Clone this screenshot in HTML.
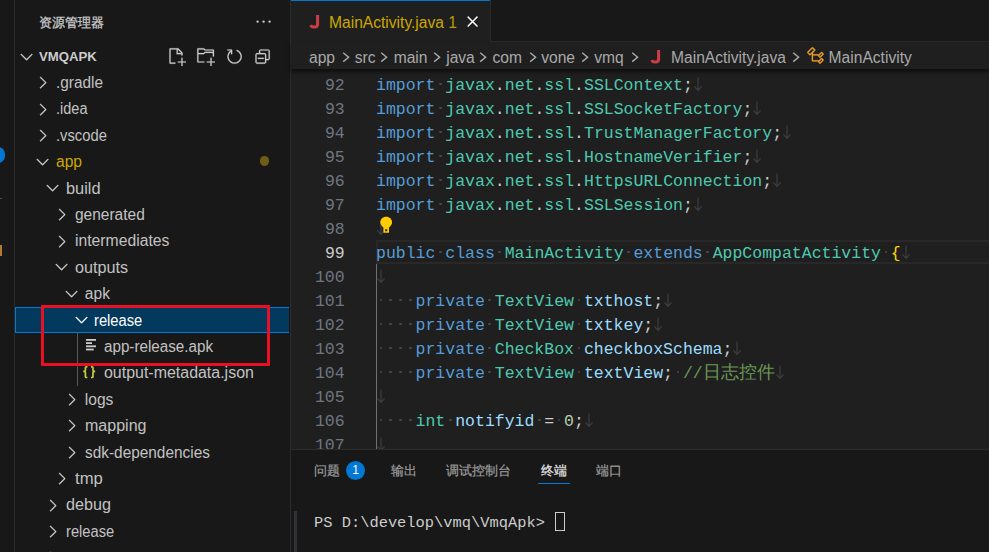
<!DOCTYPE html>
<html><head><meta charset="utf-8"><style>
*{margin:0;padding:0;box-sizing:border-box}
html,body{width:989px;height:552px;overflow:hidden;background:#181818;font-family:"Liberation Sans",sans-serif;}
.a{position:absolute}
.row{position:absolute;left:15px;width:275px;height:26.4px;font-size:15.6px;color:#cccccc;white-space:nowrap}
.row .t{position:absolute;top:0;line-height:26.4px}
.code{font-family:"Liberation Mono",monospace;font-size:16.5px;white-space:pre;line-height:24px}
.ln{position:absolute;left:291px;width:54.5px;text-align:right;color:#6e7681}
.cl{position:absolute;left:375px;color:#cccccc}
.k{color:#569cd6}.ty{color:#4ec9b0}.v{color:#9cdcfe}.c{color:#6a9955}.n{color:#b5cea8}.br{color:#ffd700}.p{color:#d4d4d4}
.ws{color:#404040}
.d{display:inline-block;width:9.9px;height:1px;position:relative}
.d::after{content:'';position:absolute;left:3.6px;top:-6.6px;width:2.7px;height:2.7px;border-radius:50%;background:#484848}
.ptab{position:absolute;font-size:13.2px;color:#9d9d9d;white-space:nowrap;line-height:20px}
</style></head><body>
<div class="a" style="left:0;top:0;width:14px;height:552px;background:#181818"></div>
<div class="a" style="left:14px;top:0;width:1px;height:552px;background:#2b2b2b"></div>
<div class="a" style="left:-9px;top:146.5px;width:14px;height:16px;border-radius:8px;background:#0078d4"></div>
<div class="a" style="left:0;top:245px;width:1.5px;height:11px;background:#b07a30"></div>
<div class="a" style="left:0;top:197.5px;width:1.5px;height:1.5px;background:#7a3a2a"></div>
<div class="a" style="left:15px;top:0;width:275px;height:552px;background:#181818"></div>
<div class="a" style="left:290px;top:0;width:1px;height:552px;background:#2b2b2b"></div>
<div class="a" style="left:38.6px;top:12.8px;font-size:13.2px;color:#cccccc;white-space:nowrap;line-height:20px;-webkit-text-stroke:0.3px #cccccc">资源管理器</div>
<svg class="a" style="left:16.9px;top:46.9px" width="19.2" height="19.2" viewBox="0 0 16 16" fill="#cccccc"><path d="M7.976 10.072l4.357-4.357.62.618L8.284 11h-.618L3 6.333l.619-.618 4.357 4.357z" stroke="#cccccc" stroke-width="0.25"/></svg>
<svg class="a" style="left:253.6px;top:11.9px" width="19.2" height="19.2" viewBox="0 0 16 16" fill="#cccccc"><path d="M4 8a1 1 0 1 1-2 0 1 1 0 0 1 2 0zm5 0a1 1 0 1 1-2 0 1 1 0 0 1 2 0zm5 0a1 1 0 1 1-2 0 1 1 0 0 1 2 0z"/></svg>
<div class="a" style="left:39px;top:47.7px;font-size:13.2px;font-weight:bold;color:#cccccc;line-height:18px">VMQAPK</div>
<svg class="a" style="left:167.1px;top:46.7px" width="19.2" height="19.2" viewBox="0 0 16 16" fill="#cccccc" stroke="#cccccc" stroke-width="0.15"><path fill-rule="evenodd" d="M9.5 1.1l3.4 3.5.1.4v2h-1V6H8V2H3v11h4v1H2.5l-.5-.5v-12l.5-.5h6.7l.3.1zM9 2v3h2.9L9 2zm4 14h-1v-3H9v-1h3V9h1v3h3v1h-3v3z"/></svg>
<svg class="a" style="left:195.8px;top:46.7px" width="19.2" height="19.2" viewBox="0 0 16 16" fill="#cccccc" stroke="#cccccc" stroke-width="0.15"><path fill-rule="evenodd" d="M14.5 2H7.710l-.85-.85L6.51 1h-5l-.5.5v11l.5.5H7v-1H1.99V6h4.49l.35-.15.86-.86H14v1.5l-.001 1.51h1.011V2.5L14.5 2zm-.51 2h-6.5l-.35.15-.86.86H2v-3h4.29l.85.85.36.15H14l-.01.99zM13 16h-1v-3H9v-1h3V9h1v3h3v1h-3v3z"/></svg>
<svg class="a" style="left:224.6px;top:46.7px" width="19.2" height="19.2" viewBox="0 0 16 16" fill="#cccccc" stroke="#cccccc" stroke-width="0.15"><path fill-rule="evenodd" d="M5.56253 2.51577C3.46348 3.4501 2 5.55414 2 7.99999C2 11.3137 4.68629 14 8 14C11.3137 14 14 11.3137 14 7.99999C14 5.32519 12.2497 3.05919 9.83199 2.28482L9.52968 3.23832C11.5429 3.88454 13 5.7721 13 7.99999C13 10.7614 10.7614 13 8 13C5.23858 13 3 10.7614 3 7.99999C3 6.31104 3.83742 4.81767 5.11969 3.91245L5.56253 2.51577Z"/><path fill-rule="evenodd" d="M5 3H2V2H5.5L6 2.5V6H5V3Z"/></svg>
<svg class="a" style="left:253.4px;top:46.7px" width="19.2" height="19.2" viewBox="0 0 16 16" fill="#cccccc" stroke="#cccccc" stroke-width="0.15"><path d="M9 9H4v1h5V9z"/><path fill-rule="evenodd" d="M5 3l1-1h7l1 1v7l-1 1h-2v2l-1 1H3l-1-1V6l1-1h2V3zm1 2h4l1 1v4h2V3H6v2zm4 1H3v7h7V6z"/></svg>
<svg class="a" style="left:33.2px;top:73.1px" width="19.2" height="19.2" viewBox="0 0 16 16" fill="#cccccc"><path d="M10.072 8.024L5.715 3.667l.618-.62L11 7.716v.618L6.333 13l-.618-.619 4.357-4.357z" stroke="#cccccc" stroke-width="0.25"/></svg>
<div class="a" style="left:56.0px;top:69.9px;font-size:15.6px;color:#c2c2c2;white-space:nowrap;line-height:26.4px;transform:scaleX(0.985);transform-origin:0 0">.gradle</div>
<svg class="a" style="left:33.2px;top:99.5px" width="19.2" height="19.2" viewBox="0 0 16 16" fill="#cccccc"><path d="M10.072 8.024L5.715 3.667l.618-.62L11 7.716v.618L6.333 13l-.618-.619 4.357-4.357z" stroke="#cccccc" stroke-width="0.25"/></svg>
<div class="a" style="left:56.0px;top:96.3px;font-size:15.6px;color:#c2c2c2;white-space:nowrap;line-height:26.4px;transform:scaleX(0.931);transform-origin:0 0">.idea</div>
<svg class="a" style="left:33.2px;top:125.89999999999999px" width="19.2" height="19.2" viewBox="0 0 16 16" fill="#cccccc"><path d="M10.072 8.024L5.715 3.667l.618-.62L11 7.716v.618L6.333 13l-.618-.619 4.357-4.357z" stroke="#cccccc" stroke-width="0.25"/></svg>
<div class="a" style="left:56.0px;top:122.7px;font-size:15.6px;color:#c2c2c2;white-space:nowrap;line-height:26.4px;transform:scaleX(0.947);transform-origin:0 0">.vscode</div>
<div class="a" style="left:260px;top:156.3px;width:9.4px;height:9.4px;border-radius:5px;background:#6f5d15"></div>
<svg class="a" style="left:33.2px;top:151.7px" width="19.2" height="19.2" viewBox="0 0 16 16" fill="#cccccc"><path d="M7.976 10.072l4.357-4.357.62.618L8.284 11h-.618L3 6.333l.619-.618 4.357 4.357z" stroke="#cccccc" stroke-width="0.25"/></svg>
<div class="a" style="left:56.0px;top:149.1px;font-size:15.6px;color:#cca700;white-space:nowrap;line-height:26.4px;transform:scaleX(1.000);transform-origin:0 0">app</div>
<svg class="a" style="left:42.8px;top:178.1px" width="19.2" height="19.2" viewBox="0 0 16 16" fill="#cccccc"><path d="M7.976 10.072l4.357-4.357.62.618L8.284 11h-.618L3 6.333l.619-.618 4.357 4.357z" stroke="#cccccc" stroke-width="0.25"/></svg>
<div class="a" style="left:65.6px;top:175.5px;font-size:15.6px;color:#c2c2c2;white-space:nowrap;line-height:26.4px;transform:scaleX(1.051);transform-origin:0 0">build</div>
<svg class="a" style="left:52.400000000000006px;top:205.1px" width="19.2" height="19.2" viewBox="0 0 16 16" fill="#cccccc"><path d="M10.072 8.024L5.715 3.667l.618-.62L11 7.716v.618L6.333 13l-.618-.619 4.357-4.357z" stroke="#cccccc" stroke-width="0.25"/></svg>
<div class="a" style="left:75.2px;top:201.9px;font-size:15.6px;color:#c2c2c2;white-space:nowrap;line-height:26.4px;transform:scaleX(0.993);transform-origin:0 0">generated</div>
<svg class="a" style="left:52.400000000000006px;top:231.49999999999997px" width="19.2" height="19.2" viewBox="0 0 16 16" fill="#cccccc"><path d="M10.072 8.024L5.715 3.667l.618-.62L11 7.716v.618L6.333 13l-.618-.619 4.357-4.357z" stroke="#cccccc" stroke-width="0.25"/></svg>
<div class="a" style="left:75.2px;top:228.3px;font-size:15.6px;color:#c2c2c2;white-space:nowrap;line-height:26.4px;transform:scaleX(1.008);transform-origin:0 0">intermediates</div>
<svg class="a" style="left:52.400000000000006px;top:257.29999999999995px" width="19.2" height="19.2" viewBox="0 0 16 16" fill="#cccccc"><path d="M7.976 10.072l4.357-4.357.62.618L8.284 11h-.618L3 6.333l.619-.618 4.357 4.357z" stroke="#cccccc" stroke-width="0.25"/></svg>
<div class="a" style="left:75.2px;top:254.7px;font-size:15.6px;color:#c2c2c2;white-space:nowrap;line-height:26.4px;transform:scaleX(1.037);transform-origin:0 0">outputs</div>
<svg class="a" style="left:62.0px;top:283.69999999999993px" width="19.2" height="19.2" viewBox="0 0 16 16" fill="#cccccc"><path d="M7.976 10.072l4.357-4.357.62.618L8.284 11h-.618L3 6.333l.619-.618 4.357 4.357z" stroke="#cccccc" stroke-width="0.25"/></svg>
<div class="a" style="left:84.8px;top:281.1px;font-size:15.6px;color:#c2c2c2;white-space:nowrap;line-height:26.4px;transform:scaleX(1.000);transform-origin:0 0">apk</div>
<div class="a" style="left:15px;top:306.7px;width:274px;height:26.4px;background:#04395e;border:1px solid #0078d4;border-right:none"></div>
<svg class="a" style="left:71.60000000000001px;top:310.09999999999997px" width="19.2" height="19.2" viewBox="0 0 16 16" fill="#ffffff"><path d="M7.976 10.072l4.357-4.357.62.618L8.284 11h-.618L3 6.333l.619-.618 4.357 4.357z" stroke="#ffffff" stroke-width="0.25"/></svg>
<div class="a" style="left:94.4px;top:307.5px;font-size:15.6px;color:#ffffff;white-space:nowrap;line-height:26.4px;transform:scaleX(0.944);transform-origin:0 0">release</div>
<svg class="a" style="left:86px;top:338.6px" width="12" height="14" viewBox="0 0 12 14" fill="#cccccc"><rect x="0" y="0" width="10" height="1.8"/><rect x="0" y="3.2" width="6" height="1.8"/><rect x="0" y="6.4" width="10" height="1.8"/><rect x="0" y="9.6" width="7.7" height="1.8"/></svg>
<div class="a" style="left:104.0px;top:333.9px;font-size:15.6px;color:#c2c2c2;white-space:nowrap;line-height:26.4px;transform:scaleX(0.975);transform-origin:0 0">app-release.apk</div>
<svg class="a" style="left:82px;top:364.8px" width="15" height="14" viewBox="0 0 15 14" fill="none" stroke="#cbcb41" stroke-width="1.7"><path d="M5.4 1.8 H4.4 Q3.4 1.8 3.4 2.8 V5.2 Q3.4 6.4 1.2 6.4 Q3.4 6.4 3.4 7.6 V11.5 Q3.4 12.5 4.4 12.5 H5.4"/><path d="M9 1.8 H10 Q11 1.8 11 2.8 V5.2 Q11 6.4 13.2 6.4 Q11 6.4 11 7.6 V11.5 Q11 12.5 10 12.5 H9"/></svg>
<div class="a" style="left:104.0px;top:360.3px;font-size:15.6px;color:#c2c2c2;white-space:nowrap;line-height:26.4px;transform:scaleX(1.023);transform-origin:0 0">output-metadata.json</div>
<svg class="a" style="left:62.0px;top:389.9px" width="19.2" height="19.2" viewBox="0 0 16 16" fill="#cccccc"><path d="M10.072 8.024L5.715 3.667l.618-.62L11 7.716v.618L6.333 13l-.618-.619 4.357-4.357z" stroke="#cccccc" stroke-width="0.25"/></svg>
<div class="a" style="left:84.8px;top:386.7px;font-size:15.6px;color:#c2c2c2;white-space:nowrap;line-height:26.4px;transform:scaleX(1.000);transform-origin:0 0">logs</div>
<svg class="a" style="left:62.0px;top:416.29999999999995px" width="19.2" height="19.2" viewBox="0 0 16 16" fill="#cccccc"><path d="M10.072 8.024L5.715 3.667l.618-.62L11 7.716v.618L6.333 13l-.618-.619 4.357-4.357z" stroke="#cccccc" stroke-width="0.25"/></svg>
<div class="a" style="left:84.8px;top:413.1px;font-size:15.6px;color:#c2c2c2;white-space:nowrap;line-height:26.4px;transform:scaleX(1.028);transform-origin:0 0">mapping</div>
<svg class="a" style="left:62.0px;top:442.69999999999993px" width="19.2" height="19.2" viewBox="0 0 16 16" fill="#cccccc"><path d="M10.072 8.024L5.715 3.667l.618-.62L11 7.716v.618L6.333 13l-.618-.619 4.357-4.357z" stroke="#cccccc" stroke-width="0.25"/></svg>
<div class="a" style="left:84.8px;top:439.5px;font-size:15.6px;color:#c2c2c2;white-space:nowrap;line-height:26.4px;transform:scaleX(0.987);transform-origin:0 0">sdk-dependencies</div>
<svg class="a" style="left:52.400000000000006px;top:469.1px" width="19.2" height="19.2" viewBox="0 0 16 16" fill="#cccccc"><path d="M10.072 8.024L5.715 3.667l.618-.62L11 7.716v.618L6.333 13l-.618-.619 4.357-4.357z" stroke="#cccccc" stroke-width="0.25"/></svg>
<div class="a" style="left:75.2px;top:465.9px;font-size:15.6px;color:#c2c2c2;white-space:nowrap;line-height:26.4px;transform:scaleX(1.068);transform-origin:0 0">tmp</div>
<svg class="a" style="left:42.8px;top:495.5px" width="19.2" height="19.2" viewBox="0 0 16 16" fill="#cccccc"><path d="M10.072 8.024L5.715 3.667l.618-.62L11 7.716v.618L6.333 13l-.618-.619 4.357-4.357z" stroke="#cccccc" stroke-width="0.25"/></svg>
<div class="a" style="left:65.6px;top:492.3px;font-size:15.6px;color:#c2c2c2;white-space:nowrap;line-height:26.4px;transform:scaleX(1.036);transform-origin:0 0">debug</div>
<svg class="a" style="left:42.8px;top:521.9px" width="19.2" height="19.2" viewBox="0 0 16 16" fill="#cccccc"><path d="M10.072 8.024L5.715 3.667l.618-.62L11 7.716v.618L6.333 13l-.618-.619 4.357-4.357z" stroke="#cccccc" stroke-width="0.25"/></svg>
<div class="a" style="left:65.6px;top:518.7px;font-size:15.6px;color:#c2c2c2;white-space:nowrap;line-height:26.4px;transform:scaleX(0.943);transform-origin:0 0">release</div>
<svg class="a" style="left:42.8px;top:548.3px" width="19.2" height="19.2" viewBox="0 0 16 16" fill="#cccccc"><path d="M10.072 8.024L5.715 3.667l.618-.62L11 7.716v.618L6.333 13l-.618-.619 4.357-4.357z" stroke="#cccccc" stroke-width="0.25"/></svg>
<div class="a" style="left:65.6px;top:545.1px;font-size:15.6px;color:#c2c2c2;white-space:nowrap;line-height:26.4px;transform:scaleX(1.000);transform-origin:0 0">src</div>
<div class="a" style="left:77px;top:333.1px;width:1px;height:52.8px;background:#585858"></div>
<div class="a" style="left:41px;top:305px;width:229px;height:61px;border:3px solid #e81123"></div>
<div class="a" style="left:291px;top:0;width:698px;height:451px;background:#1f1f1f"></div>
<div class="a" style="left:291px;top:0;width:698px;height:42px;background:#181818"></div>
<div class="a" style="left:291px;top:41px;width:698px;height:1px;background:#2b2b2b"></div>
<div class="a" style="left:291px;top:0;width:200px;height:42px;background:#1f1f1f;border-right:1px solid #2b2b2b"></div>
<div class="a" style="left:291px;top:0;width:199px;height:1.3px;background:#0078d4"></div>
<svg class="a" style="left:308.8px;top:14.3px;z-index:4" width="12.0" height="15.0" viewBox="0 0 12 15"><path d="M8.6 1 V10 Q8.6 13 5.6 13 H4.6 Q2.4 13 1.6 11.2" fill="none" stroke="#cc3e44" stroke-width="3"/></svg>
<div class="a" style="left:329px;top:13px;font-size:15.6px;color:#cca700;line-height:20px;white-space:nowrap">MainActivity.java <span style="color:#b89a00">1</span></div>
<svg class="a" style="left:462.8px;top:11.5px" width="19.2" height="19.2" viewBox="0 0 16 16" fill="#ffffff"><path d="M8 8.707l3.646 3.647.708-.707L8.707 8l3.647-3.646-.707-.708L8 7.293 4.354 3.646l-.707.708L7.293 8l-3.646 3.646.707.708L8 8.707z" stroke="#ffffff" stroke-width="0.3"/></svg>
<div class="a" style="left:291px;top:42px;width:698px;height:26.6px;background:#1f1f1f;box-shadow:0 3px 4px rgba(0,0,0,0.55);z-index:3"></div>
<div class="a" style="left:309px;top:47.5px;font-size:15.6px;color:#a9a9a9;line-height:20px;white-space:nowrap;z-index:4">app</div>
<svg class="a" style="left:341.79999999999995px;top:52.2px;z-index:4" width="9" height="11" viewBox="0 0 9 11"><path d="M1.2 0.8 L6.6 5.2 L1.2 9.6" fill="none" stroke="#a9a9a9" stroke-width="1.45"/></svg>
<div class="a" style="left:354.8px;top:47.5px;font-size:15.6px;color:#a9a9a9;line-height:20px;white-space:nowrap;z-index:4">src</div>
<svg class="a" style="left:379.79999999999995px;top:52.2px;z-index:4" width="9" height="11" viewBox="0 0 9 11"><path d="M1.2 0.8 L6.6 5.2 L1.2 9.6" fill="none" stroke="#a9a9a9" stroke-width="1.45"/></svg>
<div class="a" style="left:393.7px;top:47.5px;font-size:15.6px;color:#a9a9a9;line-height:20px;white-space:nowrap;z-index:4">main</div>
<svg class="a" style="left:433.2px;top:52.2px;z-index:4" width="9" height="11" viewBox="0 0 9 11"><path d="M1.2 0.8 L6.6 5.2 L1.2 9.6" fill="none" stroke="#a9a9a9" stroke-width="1.45"/></svg>
<div class="a" style="left:446.2px;top:47.5px;font-size:15.6px;color:#a9a9a9;line-height:20px;white-space:nowrap;z-index:4">java</div>
<svg class="a" style="left:479.4px;top:52.2px;z-index:4" width="9" height="11" viewBox="0 0 9 11"><path d="M1.2 0.8 L6.6 5.2 L1.2 9.6" fill="none" stroke="#a9a9a9" stroke-width="1.45"/></svg>
<div class="a" style="left:492.5px;top:47.5px;font-size:15.6px;color:#a9a9a9;line-height:20px;white-space:nowrap;z-index:4">com</div>
<svg class="a" style="left:528.6999999999999px;top:52.2px;z-index:4" width="9" height="11" viewBox="0 0 9 11"><path d="M1.2 0.8 L6.6 5.2 L1.2 9.6" fill="none" stroke="#a9a9a9" stroke-width="1.45"/></svg>
<div class="a" style="left:541.2px;top:47.5px;font-size:15.6px;color:#a9a9a9;line-height:20px;white-space:nowrap;z-index:4">vone</div>
<svg class="a" style="left:581.3px;top:52.2px;z-index:4" width="9" height="11" viewBox="0 0 9 11"><path d="M1.2 0.8 L6.6 5.2 L1.2 9.6" fill="none" stroke="#a9a9a9" stroke-width="1.45"/></svg>
<div class="a" style="left:594.2px;top:47.5px;font-size:15.6px;color:#a9a9a9;line-height:20px;white-space:nowrap;z-index:4">vmq</div>
<svg class="a" style="left:630.5px;top:52.2px;z-index:4" width="9" height="11" viewBox="0 0 9 11"><path d="M1.2 0.8 L6.6 5.2 L1.2 9.6" fill="none" stroke="#a9a9a9" stroke-width="1.45"/></svg>
<svg class="a" style="left:650.3px;top:48.5px;z-index:4" width="12.0" height="15.0" viewBox="0 0 12 15"><path d="M8.6 1 V10 Q8.6 13 5.6 13 H4.6 Q2.4 13 1.6 11.2" fill="none" stroke="#cc3e44" stroke-width="3"/></svg>
<div class="a" style="left:671px;top:47.5px;font-size:15.6px;color:#a9a9a9;line-height:20px;white-space:nowrap;z-index:4">MainActivity.java</div>
<svg class="a" style="left:792.1px;top:52.2px;z-index:4" width="9" height="11" viewBox="0 0 9 11"><path d="M1.2 0.8 L6.6 5.2 L1.2 9.6" fill="none" stroke="#a9a9a9" stroke-width="1.45"/></svg>
<svg class="a" style="z-index:4;left:805.7px;top:46px" width="19.2" height="19.2" viewBox="0 0 16 16" fill="#ee9d28" stroke="#ee9d28" stroke-width="0.2"><path d="M11.34 9.71h.71l2.67-2.67v-.71L13.38 5h-.7l-1.82 1.81h-5V5.56l1.86-1.85V3l-2-2H5L1 5v.71l2 2h.71l1.14-1.15v5.79l.5.5H10v.52l1.33 1.34h.71l2.670-2.67v-.71L13.37 10h-.7l-1.86 1.85h-5v-4H10v.48l1.34 1.38zm1.69-3.65l.63.63-2 2-.63-.63 2-2zm0 5l.63.63-2 2-.63-.63 2-2zM3.350 6.65L2.060 5.36 5.290 2.130 6.580 3.420 3.350 6.65z"/></svg>
<div class="a" style="left:828.6px;top:47.5px;font-size:15.6px;color:#a9a9a9;line-height:20px;white-space:nowrap;z-index:4">MainActivity</div>
<div class="a" style="left:375.5px;top:240px;width:620px;height:24px;border:2px solid #282828"></div>
<div class="a code" style="left:291px;top:50.400000000000006px;width:53.7px;text-align:right;color:#6e7681">91</div>
<div class="a code" style="left:376.0px;top:50.400000000000006px;color:#cccccc"><span class="k">import</span><span class="d"></span><span class="ty">javax</span>.<span class="ty">net</span>.<span class="ty">ssl</span>.<span class="ty">X509TrustManager</span>;<svg width="9.9" height="15" viewBox="0 0 9.9 15" style="vertical-align:-2px"><path d="M5 0.5 V13.3 M1.4 9.3 L5 13.3 L8.6 9.3" fill="none" stroke="#3e3e3e" stroke-width="1.2"/></svg></div>
<div class="a code" style="left:291px;top:74.4px;width:53.7px;text-align:right;color:#6e7681">92</div>
<div class="a code" style="left:376.0px;top:74.4px;color:#cccccc"><span class="k">import</span><span class="d"></span><span class="ty">javax</span>.<span class="ty">net</span>.<span class="ty">ssl</span>.<span class="ty">SSLContext</span>;<svg width="9.9" height="15" viewBox="0 0 9.9 15" style="vertical-align:-2px"><path d="M5 0.5 V13.3 M1.4 9.3 L5 13.3 L8.6 9.3" fill="none" stroke="#3e3e3e" stroke-width="1.2"/></svg></div>
<div class="a code" style="left:291px;top:98.4px;width:53.7px;text-align:right;color:#6e7681">93</div>
<div class="a code" style="left:376.0px;top:98.4px;color:#cccccc"><span class="k">import</span><span class="d"></span><span class="ty">javax</span>.<span class="ty">net</span>.<span class="ty">ssl</span>.<span class="ty">SSLSocketFactory</span>;<svg width="9.9" height="15" viewBox="0 0 9.9 15" style="vertical-align:-2px"><path d="M5 0.5 V13.3 M1.4 9.3 L5 13.3 L8.6 9.3" fill="none" stroke="#3e3e3e" stroke-width="1.2"/></svg></div>
<div class="a code" style="left:291px;top:122.4px;width:53.7px;text-align:right;color:#6e7681">94</div>
<div class="a code" style="left:376.0px;top:122.4px;color:#cccccc"><span class="k">import</span><span class="d"></span><span class="ty">javax</span>.<span class="ty">net</span>.<span class="ty">ssl</span>.<span class="ty">TrustManagerFactory</span>;<svg width="9.9" height="15" viewBox="0 0 9.9 15" style="vertical-align:-2px"><path d="M5 0.5 V13.3 M1.4 9.3 L5 13.3 L8.6 9.3" fill="none" stroke="#3e3e3e" stroke-width="1.2"/></svg></div>
<div class="a code" style="left:291px;top:146.4px;width:53.7px;text-align:right;color:#6e7681">95</div>
<div class="a code" style="left:376.0px;top:146.4px;color:#cccccc"><span class="k">import</span><span class="d"></span><span class="ty">javax</span>.<span class="ty">net</span>.<span class="ty">ssl</span>.<span class="ty">HostnameVerifier</span>;<svg width="9.9" height="15" viewBox="0 0 9.9 15" style="vertical-align:-2px"><path d="M5 0.5 V13.3 M1.4 9.3 L5 13.3 L8.6 9.3" fill="none" stroke="#3e3e3e" stroke-width="1.2"/></svg></div>
<div class="a code" style="left:291px;top:170.4px;width:53.7px;text-align:right;color:#6e7681">96</div>
<div class="a code" style="left:376.0px;top:170.4px;color:#cccccc"><span class="k">import</span><span class="d"></span><span class="ty">javax</span>.<span class="ty">net</span>.<span class="ty">ssl</span>.<span class="ty">HttpsURLConnection</span>;<svg width="9.9" height="15" viewBox="0 0 9.9 15" style="vertical-align:-2px"><path d="M5 0.5 V13.3 M1.4 9.3 L5 13.3 L8.6 9.3" fill="none" stroke="#3e3e3e" stroke-width="1.2"/></svg></div>
<div class="a code" style="left:291px;top:194.4px;width:53.7px;text-align:right;color:#6e7681">97</div>
<div class="a code" style="left:376.0px;top:194.4px;color:#cccccc"><span class="k">import</span><span class="d"></span><span class="ty">javax</span>.<span class="ty">net</span>.<span class="ty">ssl</span>.<span class="ty">SSLSession</span>;<svg width="9.9" height="15" viewBox="0 0 9.9 15" style="vertical-align:-2px"><path d="M5 0.5 V13.3 M1.4 9.3 L5 13.3 L8.6 9.3" fill="none" stroke="#3e3e3e" stroke-width="1.2"/></svg></div>
<div class="a code" style="left:291px;top:218.4px;width:53.7px;text-align:right;color:#6e7681">98</div>
<div class="a code" style="left:376.0px;top:218.4px;color:#cccccc"><svg width="9.9" height="15" viewBox="0 0 9.9 15" style="vertical-align:-2px"><path d="M5 0.5 V13.3 M1.4 9.3 L5 13.3 L8.6 9.3" fill="none" stroke="#3e3e3e" stroke-width="1.2"/></svg></div>
<div class="a code" style="left:291px;top:242.4px;width:53.7px;text-align:right;color:#cccccc">99</div>
<div class="a code" style="left:376.0px;top:242.4px;color:#cccccc"><span class="k">public</span><span class="d"></span><span class="k">class</span><span class="d"></span><span class="ty">MainActivity</span><span class="d"></span><span class="k">extends</span><span class="d"></span><span class="ty">AppCompatActivity</span><span class="d"></span><span class="br">{</span><svg width="9.9" height="15" viewBox="0 0 9.9 15" style="vertical-align:-2px"><path d="M5 0.5 V13.3 M1.4 9.3 L5 13.3 L8.6 9.3" fill="none" stroke="#3e3e3e" stroke-width="1.2"/></svg></div>
<div class="a code" style="left:291px;top:266.4px;width:53.7px;text-align:right;color:#6e7681">100</div>
<div class="a code" style="left:376.0px;top:266.4px;color:#cccccc"><svg width="9.9" height="15" viewBox="0 0 9.9 15" style="vertical-align:-2px"><path d="M5 0.5 V13.3 M1.4 9.3 L5 13.3 L8.6 9.3" fill="none" stroke="#3e3e3e" stroke-width="1.2"/></svg></div>
<div class="a code" style="left:291px;top:290.4px;width:53.7px;text-align:right;color:#6e7681">101</div>
<div class="a code" style="left:376.0px;top:290.4px;color:#cccccc"><span class="d"></span><span class="d"></span><span class="d"></span><span class="d"></span><span class="k">private</span><span class="d"></span><span class="ty">TextView</span><span class="d"></span><span class="v">txthost</span>;<svg width="9.9" height="15" viewBox="0 0 9.9 15" style="vertical-align:-2px"><path d="M5 0.5 V13.3 M1.4 9.3 L5 13.3 L8.6 9.3" fill="none" stroke="#3e3e3e" stroke-width="1.2"/></svg></div>
<div class="a code" style="left:291px;top:314.4px;width:53.7px;text-align:right;color:#6e7681">102</div>
<div class="a code" style="left:376.0px;top:314.4px;color:#cccccc"><span class="d"></span><span class="d"></span><span class="d"></span><span class="d"></span><span class="k">private</span><span class="d"></span><span class="ty">TextView</span><span class="d"></span><span class="v">txtkey</span>;<svg width="9.9" height="15" viewBox="0 0 9.9 15" style="vertical-align:-2px"><path d="M5 0.5 V13.3 M1.4 9.3 L5 13.3 L8.6 9.3" fill="none" stroke="#3e3e3e" stroke-width="1.2"/></svg></div>
<div class="a code" style="left:291px;top:338.4px;width:53.7px;text-align:right;color:#6e7681">103</div>
<div class="a code" style="left:376.0px;top:338.4px;color:#cccccc"><span class="d"></span><span class="d"></span><span class="d"></span><span class="d"></span><span class="k">private</span><span class="d"></span><span class="ty">CheckBox</span><span class="d"></span><span class="v">checkboxSchema</span>;<svg width="9.9" height="15" viewBox="0 0 9.9 15" style="vertical-align:-2px"><path d="M5 0.5 V13.3 M1.4 9.3 L5 13.3 L8.6 9.3" fill="none" stroke="#3e3e3e" stroke-width="1.2"/></svg></div>
<div class="a code" style="left:291px;top:362.4px;width:53.7px;text-align:right;color:#6e7681">104</div>
<div class="a code" style="left:376.0px;top:362.4px;color:#cccccc"><span class="d"></span><span class="d"></span><span class="d"></span><span class="d"></span><span class="k">private</span><span class="d"></span><span class="ty">TextView</span><span class="d"></span><span class="v">textView</span>;<span class="d"></span><span class="c">//<span style="font-size:18px;line-height:10px">日志控件</span></span><svg width="9.9" height="15" viewBox="0 0 9.9 15" style="vertical-align:-2px"><path d="M5 0.5 V13.3 M1.4 9.3 L5 13.3 L8.6 9.3" fill="none" stroke="#3e3e3e" stroke-width="1.2"/></svg></div>
<div class="a code" style="left:291px;top:386.4px;width:53.7px;text-align:right;color:#6e7681">105</div>
<div class="a code" style="left:376.0px;top:386.4px;color:#cccccc"><svg width="9.9" height="15" viewBox="0 0 9.9 15" style="vertical-align:-2px"><path d="M5 0.5 V13.3 M1.4 9.3 L5 13.3 L8.6 9.3" fill="none" stroke="#3e3e3e" stroke-width="1.2"/></svg></div>
<div class="a code" style="left:291px;top:410.4px;width:53.7px;text-align:right;color:#6e7681">106</div>
<div class="a code" style="left:376.0px;top:410.4px;color:#cccccc"><span class="d"></span><span class="d"></span><span class="d"></span><span class="d"></span><span class="ty">int</span><span class="d"></span><span class="v">notifyid</span><span class="d"></span>=<span class="d"></span><span class="n">0</span>;<svg width="9.9" height="15" viewBox="0 0 9.9 15" style="vertical-align:-2px"><path d="M5 0.5 V13.3 M1.4 9.3 L5 13.3 L8.6 9.3" fill="none" stroke="#3e3e3e" stroke-width="1.2"/></svg></div>
<div class="a code" style="left:291px;top:434.4px;width:53.7px;text-align:right;color:#6e7681">107</div>
<div class="a code" style="left:376.0px;top:434.4px;color:#cccccc"><svg width="9.9" height="15" viewBox="0 0 9.9 15" style="vertical-align:-2px"><path d="M5 0.5 V13.3 M1.4 9.3 L5 13.3 L8.6 9.3" fill="none" stroke="#3e3e3e" stroke-width="1.2"/></svg></div>
<div class="a" style="left:376px;top:264px;width:1.2px;height:187px;background:#707070"></div>
<svg class="a" style="left:378px;top:215px" width="16" height="20" viewBox="0 0 16 20"><path d="M8.2 1.8 C4.8 1.8 2.3 4.2 2.3 7.4 C2.3 9.6 4 11 5.4 12.5 V17.8 H11 V12.5 C12.4 11 14.1 9.6 14.1 7.4 C14.1 4.2 11.6 1.8 8.2 1.8Z M7.2 14.3 H9.2 V16.2 H7.2Z" fill="#ffcc00" fill-rule="evenodd"/></svg>
<div class="a" style="left:291px;top:449px;width:698px;height:103px;background:#181818;z-index:5"></div>
<div class="a" style="left:291px;top:449px;width:698px;height:1px;background:#2b2b2b;z-index:5"></div>
<div class="a" style="left:314px;top:460.7px;font-size:13.3px;-webkit-text-stroke:0.2px #9d9d9d;color:#9d9d9d;line-height:20px;white-space:nowrap;z-index:6">问题</div>
<div class="a" style="left:391px;top:460.7px;font-size:13.3px;-webkit-text-stroke:0.2px #9d9d9d;color:#9d9d9d;line-height:20px;white-space:nowrap;z-index:6">输出</div>
<div class="a" style="left:446px;top:460.7px;font-size:13.3px;-webkit-text-stroke:0.2px #9d9d9d;color:#9d9d9d;line-height:20px;white-space:nowrap;z-index:6">调试控制台</div>
<div class="a" style="left:541px;top:460.7px;font-size:13.3px;-webkit-text-stroke:0.2px #e7e7e7;color:#e7e7e7;line-height:20px;white-space:nowrap;z-index:6">终端</div>
<div class="a" style="left:596px;top:460.7px;font-size:13.3px;-webkit-text-stroke:0.2px #9d9d9d;color:#9d9d9d;line-height:20px;white-space:nowrap;z-index:6">端口</div>
<div class="a" style="left:346px;top:461px;width:19px;height:19px;border-radius:10px;background:#0078d4;color:#fff;font-size:12px;text-align:center;line-height:19px;z-index:6">1</div>
<div class="a" style="left:538.3px;top:483px;width:31.5px;height:1.2px;background:#0078d4;z-index:6"></div>
<div class="a" style="left:294.3px;top:510.8px;width:2.4px;height:42px;background:#313136;z-index:6"></div>
<div class="a code" style="left:314px;top:510.8px;color:#cccccc;z-index:6;font-size:15.4px">PS D:\develop\vmq\VmqApk&gt; </div>
<div class="a" style="left:555px;top:512px;width:9.5px;height:19px;border:1px solid #cccccc;z-index:6"></div>
</body></html>
